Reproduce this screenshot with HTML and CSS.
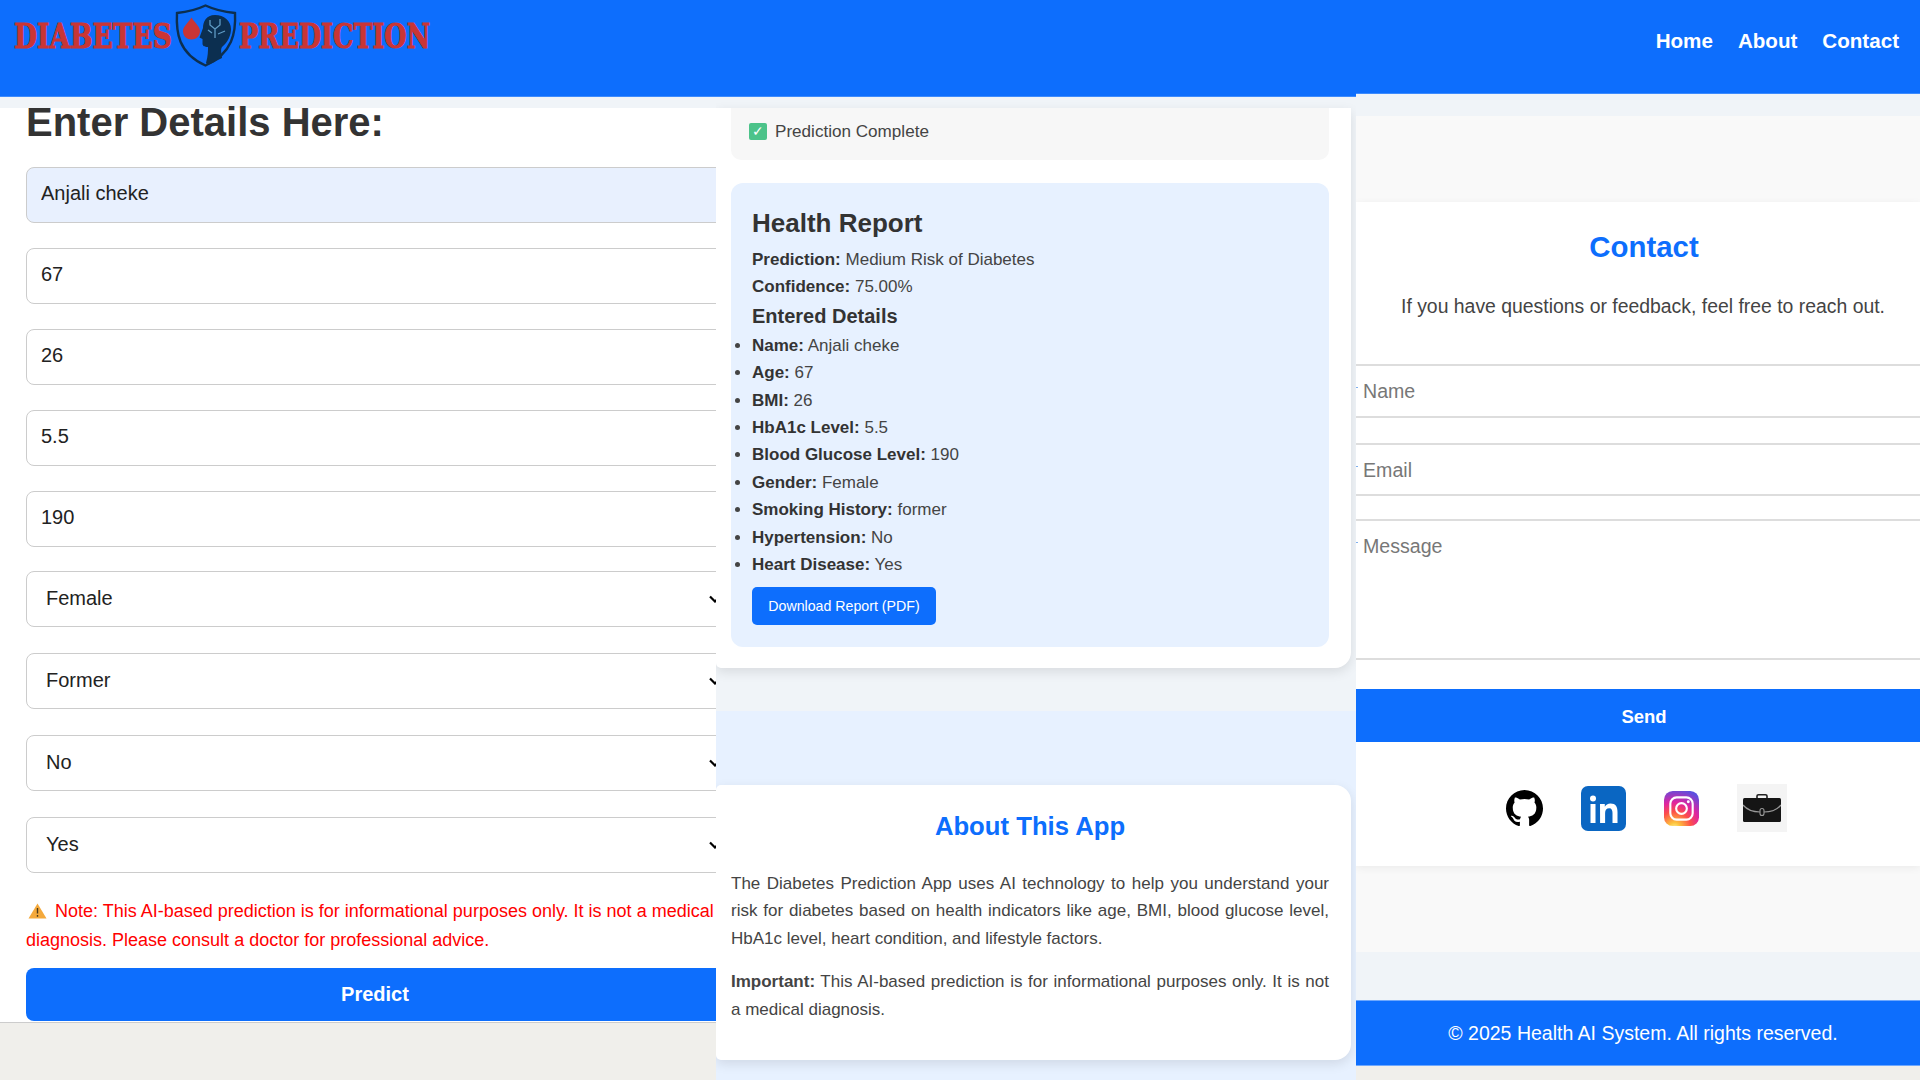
FILE: index.html
```html
<!DOCTYPE html>
<html lang="en">
<head>
    <meta charset="UTF-8">
    <meta name="viewport" content="width=device-width, initial-scale=1.0">
    <title>Diabetes Prediction</title>
    <link rel="stylesheet" href="styles.css">
</head>
<body>

<div class="collage">

    <!-- form -->
    <section class="panel panelForm">
        <header class="topBar">
            <svg class="logo" viewBox="0 0 540 70" width="540" height="70" aria-label="Diabetes Prediction">
                <text class="logoText" x="14" y="48" textLength="158" lengthAdjust="spacingAndGlyphs">DIABETES</text>
                <text class="logoText" x="239" y="48" textLength="191" lengthAdjust="spacingAndGlyphs">PREDICTION</text>
                <path d="M205.500 5.500C196 10 187 12 177 13C176 32 178 53 205.500 65.500C233 53 236 32 235 13C225 12 215 10 205.500 5.500Z" fill="none" stroke="#0c2f50" stroke-width="2.400"/>
                <path d="M191.500 17.500C187.500 23.500 183 27 183 31C183 36 187 39.500 191.500 39.500C196 39.500 200 36 200 31C200 27 195.500 23.500 191.500 17.500Z" fill="#c93535"/>
                <path d="M215 15C206 15 203 22 203 28L199.500 37.500L202.500 39L202.500 44C203 47 206 47 208 47C208 51 208 56 206 63L208 65L222 58C222 54 220 50 222 47C228 42 231 35 231 29C231 21 224 15 215 15Z" fill="#0c2f50"/>
                <path d="M215 38V29M215 29L210 25V20M215 29L220 25V19M218 34L225 31M212 33L208 30" fill="none" stroke="#5f9bc4" stroke-width="1.300"/>
            </svg>
        </header>
        <div class="gapStrip"></div>
        <div class="formBody">
            <h1>Enter Details Here:</h1>
            <input class="field fieldFilled" type="text" value="Anjali cheke">
            <input class="field" type="text" value="67">
            <input class="field" type="text" value="26">
            <input class="field" type="text" value="5.5">
            <input class="field" type="text" value="190">
            <select class="field pick pickFirst"><option>Female</option></select>
            <select class="field pick"><option>Former</option></select>
            <select class="field pick"><option>No</option></select>
            <select class="field pick"><option>Yes</option></select>
            <p class="note"><svg class="warnIcon" viewBox="0 0 19 16" width="19" height="16"><path d="M9.500 0.500L18.500 15.500H0.500Z" fill="#f4a93c"/><path d="M9.500 5V10.500M9.500 12V13.800" stroke="#4a3a1c" stroke-width="1.400"/></svg>Note: This AI-based prediction is for informational purposes only. It is not a medical diagnosis. Please consult a doctor for professional advice.</p>
            <button class="bigBtn predictBtn" type="button">Predict</button>
        </div>
        <div class="pageEnd"></div>
    </section>

    <!-- result + about -->
    <section class="panel panelResult">
        <div class="topBar"></div>
        <div class="gapStrip"></div>
        <div class="card resultCard">
            <div class="status"><span class="tick">✓</span> Prediction Complete</div>
            <div class="report">
                <h3>Health Report</h3>
                <p><strong>Prediction:</strong> Medium Risk of Diabetes</p>
                <p><strong>Confidence:</strong> 75.00%</p>
                <h4>Entered Details</h4>
                <ul>
                    <li><strong>Name:</strong> Anjali cheke</li>
                    <li><strong>Age:</strong> 67</li>
                    <li><strong>BMI:</strong> 26</li>
                    <li><strong>HbA1c Level:</strong> 5.5</li>
                    <li><strong>Blood Glucose Level:</strong> 190</li>
                    <li><strong>Gender:</strong> Female</li>
                    <li><strong>Smoking History:</strong> former</li>
                    <li><strong>Hypertension:</strong> No</li>
                    <li><strong>Heart Disease:</strong> Yes</li>
                </ul>
                <button class="pdfBtn" type="button">Download Report (PDF)</button>
            </div>
        </div>
        <div class="aboutBand">
            <div class="card aboutCard">
                <h2>About This App</h2>
                <p>The Diabetes Prediction App uses AI technology to help you understand your risk for diabetes based on health indicators like age, BMI, blood glucose level, HbA1c level, heart condition, and lifestyle factors.</p>
                <p><strong>Important:</strong> This AI-based prediction is for informational purposes only. It is not a medical diagnosis.</p>
            </div>
        </div>
    </section>

    <!-- contact -->
    <section class="panel panelContact">
        <header class="topBar contactBar">
            <nav class="nav">
                <a href="#">Home</a>
                <a href="#">About</a>
                <a href="#">Contact</a>
            </nav>
        </header>
        <div class="contactStrip"></div>
        <div class="softBand"></div>
        <div class="contactCard">
            <h2>Contact</h2>
            <p class="contactLead">If you have questions or feedback, feel free to reach out.</p>
            <div class="lineWrap"><input class="line lineName" type="text" placeholder="Name"></div>
            <div class="lineWrap"><input class="line lineMail" type="email" placeholder="Email"></div>
            <div class="lineWrap"><textarea class="line lineArea" placeholder="Message"></textarea></div>
            <button class="bigBtn sendBtn" type="button">Send</button>
            <div class="socials">
                <svg class="social" viewBox="0 0 16 16" width="37" height="37"><path fill="#000" d="M8 0C3.580 0 0 3.580 0 8c0 3.540 2.290 6.530 5.470 7.590.4.070.55-.17.55-.38 0-.19-.01-.82-.01-1.490-2.010.37-2.530-.49-2.690-.94-.09-.23-.48-.94-.82-1.130-.28-.15-.68-.52-.01-.53.630-.01 1.080.58 1.230.82.720 1.210 1.870.87 2.330.66.070-.52.280-.87.510-1.070-1.780-.2-3.640-.89-3.640-3.950 0-.87.310-1.590.820-2.150-.08-.2-.36-1.020.08-2.120 0 0 .67-.21 2.200.82.640-.18 1.320-.27 2-.27s1.360.09 2 .27c1.530-1.040 2.200-.82 2.200-.82.440 1.100.160 1.920.080 2.120.510.560.820 1.270.820 2.150 0 3.070-1.870 3.750-3.650 3.950.290.250.540.730.540 1.480 0 1.070-.010 1.930-.010 2.200 0 .210.150.460.550.380A8.010 8.010 0 0 0 16 8c0-4.420-3.580-8-8-8Z"/></svg>
                <svg class="social" viewBox="0 0 45 45" width="45" height="45"><rect width="45" height="45" rx="7" fill="#0a66c2"/><circle cx="12" cy="12.500" r="3" fill="#fff"/><path fill="#fff" d="M9.500 18h5v19h-5zM19 18h4.800v2.800c1-1.900 3-3.200 5.700-3.200 5.300 0 7 3.200 7 8.400V37h-5V27c0-2.700-.8-4.800-3.200-4.800-2.800 0-4.200 2-4.200 4.800v10h-5Z"/></svg>
                <svg class="social" viewBox="0 0 36 36" width="35" height="35">
                    <defs>
                        <radialGradient id="instaBg" cx=".3" cy="1.07" r="1.2">
                            <stop offset="0" stop-color="#fdf497"/>
                            <stop offset=".14" stop-color="#fdc23d"/>
                            <stop offset=".4" stop-color="#fd4f49"/>
                            <stop offset=".62" stop-color="#e0249f"/>
                            <stop offset=".95" stop-color="#5a4fe0"/>
                        </radialGradient>
                    </defs>
                    <rect width="36" height="36" rx="9" fill="url(#instaBg)"/>
                    <rect x="6.500" y="6.500" width="23" height="23" rx="6.500" fill="none" stroke="#fff" stroke-width="2.200"/>
                    <circle cx="18" cy="18" r="5.500" fill="none" stroke="#fff" stroke-width="2.200"/>
                    <circle cx="25" cy="11" r="1.500" fill="#fff"/>
                </svg>
                <span class="caseTile">
                    <svg viewBox="0 0 38 28" width="38" height="28">
                        <path d="M14 4V2C14 1 14.800 .8 15.500 .8H22.500C23.200 .8 24 1 24 2V4" fill="none" stroke="#222" stroke-width="1.600"/>
                        <rect y="4" width="38" height="24" rx="1.500" fill="#151515"/>
                        <path d="M0 11C5 17 11 18 17 18M21 18C27 18 33 17 38 11" fill="none" stroke="#999" stroke-width="1.200"/>
                        <rect x="17" y="14.500" width="4" height="7" rx="2" fill="#151515" stroke="#999" stroke-width="1.100"/>
                    </svg>
                </span>
            </div>
        </div>
        <div class="softBand softBandLow"></div>
        <div class="contactStrip contactStripLow"></div>
        <footer class="footer">© 2025 Health AI System. All rights reserved.</footer>
        <div class="pageEnd"></div>
    </section>

</div>

</body>
</html>
```

FILE: styles.css
```css
* {
    box-sizing: border-box;
}
html, body {
    margin: 0;
    height: 100%;
}
body {
    font-family: "Liberation Sans", Arial, sans-serif;
    background-color: #f0efeb;
    overflow: hidden;
}
.collage {
    display: grid;
    grid-template-columns: 716px 640px 564px;
    height: 1080px;
}
.panel {
    display: flex;
    flex-direction: column;
    height: 1080px;
    overflow: hidden;
}

/* top bars */
.topBar {
    flex: none;
    height: 97px;
    background-color: #0d6efd;
    border-bottom: 1px solid #3d8bfd;
}
.logo {
    display: block;
}
.logoText {
    font-family: "DejaVu Serif", serif;
    font-weight: 700;
    font-size: 34px;
    fill: #c93535;
    stroke: #c93535;
    stroke-width: 1.2px;
}
.gapStrip {
    flex: none;
    height: 11px;
    background-color: #f0f4f8;
}
.contactBar {
    display: flex;
    justify-content: flex-end;
    height: 94px;
}
.nav {
    display: flex;
    gap: 25px;
    padding: 29px 21px 0 0;
}
.nav a {
    color: white;
    font-size: 20.6px;
    font-weight: 700;
    text-decoration: none;
}

/* form column */
.panelForm {
    background-color: #fff;
}
.formBody {
    flex: none;
    height: 914px;
    width: 760px;
    padding: 0 26px;
    background-color: #fff;
}
.formBody h1 {
    margin: 0 0 25px;
    height: 34px;
    font-size: 40px;
    line-height: 28px;
    color: #333;
}
.field {
    display: block;
    width: 708px;
    height: 56px;
    margin-bottom: 25px;
    padding: 0 14px 3px;
    font-family: inherit;
    font-size: 20px;
    color: #222;
    background-color: #fff;
    border: 1px solid #ccc;
    border-radius: 8px;
}
.fieldFilled {
    background-color: #e8f0fe;
}
.pick {
    margin-bottom: 26px;
    padding: 0 19px 2px;
    appearance: none;
    background-image: url("data:image/svg+xml,%3Csvg xmlns='http://www.w3.org/2000/svg' viewBox='0 0 12 8'%3E%3Cpath d='M1 1.500L6 6.500L11 1.500' fill='none' stroke='%23000' stroke-width='2.200'/%3E%3C/svg%3E");
    background-repeat: no-repeat;
    background-size: 12px 8px;
    background-position: 682px 50%;
}
.pickFirst {
    margin-top: -1px;
}
.note {
    margin: -2px 0 0;
    width: 690px;
    font-size: 18px;
    line-height: 28.6px;
    color: red;
}
.warnIcon {
    margin: 0 8px 0 2px;
    vertical-align: -2px;
}
.bigBtn {
    display: block;
    font-family: inherit;
    font-size: 20px;
    font-weight: 700;
    color: white;
    background-color: #0d6efd;
    border: 0;
}
.predictBtn {
    width: 698px;
    height: 53px;
    margin-top: 14px;
    border-radius: 8px;
}
.pageEnd {
    flex: 1;
    background-color: #f0efeb;
    border-top: 1px solid #ccc;
}
.panelContact .pageEnd {
    border-top: 0;
}

/* middle column */
.panelResult {
    background-color: #f0f4f8;
}
.card {
    background-color: white;
    box-shadow: 0 4px 12px rgba(0, 0, 0, 0.1);
}
.resultCard {
    flex: none;
    width: 635px;
    height: 560px;
    padding: 0 22px 0 15px;
    border-radius: 0 0 16px 5px;
}
.status {
    display: flex;
    align-items: center;
    gap: 8px;
    height: 52px;
    padding: 0 0 5px 18px;
    font-size: 17.1px;
    color: #444;
    background-color: #f7f7f7;
    border-radius: 0 0 10px 10px;
}
.tick {
    width: 18px;
    height: 17px;
    font-size: 14px;
    line-height: 17px;
    text-align: center;
    color: white;
    background-color: #4cc38a;
    border-radius: 2px;
}
.report {
    height: 464px;
    margin-top: 23px;
    padding: 24px 21px;
    color: #444;
    background-color: #e7f1ff;
    border-radius: 12px;
}
.report h3 {
    margin: 0 0 7px;
    font-size: 26px;
    line-height: 32px;
    color: #333;
}
.report p {
    margin: 0;
    font-size: 17px;
    line-height: 27.4px;
}
.report strong {
    color: #333;
}
.report h4 {
    margin: 0;
    font-size: 20px;
    line-height: 31px;
    color: #333;
}
.report ul {
    margin: 0;
    padding: 0;
    font-size: 17px;
    line-height: 27.4px;
}
.pdfBtn {
    display: block;
    width: 184px;
    height: 38px;
    margin-top: 9px;
    padding: 0;
    font-family: inherit;
    font-size: 14.2px;
    color: white;
    background-color: #0d6efd;
    border: 0;
    border-radius: 5px;
}
.aboutBand {
    flex: 1;
    margin-top: 43px;
    padding-top: 74px;
    background-color: #e7f1ff;
}
.aboutCard {
    width: 635px;
    height: 275px;
    padding: 25px 22px 0 15px;
    border-radius: 5px 16px 16px 5px;
}
.aboutCard h2 {
    margin: 0 0 28px;
    font-size: 25.7px;
    line-height: 32px;
    text-align: center;
    color: #0d6efd;
}
.aboutCard p {
    margin: 0 0 16px;
    font-size: 17px;
    line-height: 27.4px;
    text-align: justify;
    color: #444;
}

/* contact column */
.contactStrip {
    flex: none;
    height: 22px;
    background-color: #f0f4f8;
}
.softBand {
    flex: none;
    height: 86px;
    background-color: #f9f9f9;
}
.contactCard {
    position: relative;
    z-index: 1;
    flex: none;
    height: 664px;
    padding-top: 27px;
    background-color: white;
    box-shadow: 0 2px 8px rgba(0, 0, 0, 0.06);
}
.contactCard h2 {
    margin: 0 0 27px;
    padding-left: 12px;
    font-size: 29.4px;
    line-height: 36px;
    text-align: center;
    color: #0d6efd;
}
.contactLead {
    margin: 0 0 44px;
    padding-left: 10px;
    font-size: 19.4px;
    line-height: 28px;
    text-align: center;
    color: #444;
}
.lineWrap {
    position: relative;
}
/* tiny blue nick left of each field */
.lineWrap::before {
    content: "";
    position: absolute;
    left: 0;
    top: 23px;
    width: 2px;
    height: 1px;
    background-color: #7fb0ee;
}
.line {
    display: block;
    width: 600px;
    margin-bottom: 25px;
    padding: 14px 7px;
    font-family: inherit;
    font-size: 19.6px;
    border: 0;
    border-top: 2px solid #ddd;
    border-bottom: 2px solid #ddd;
    background-color: white;
    resize: none;
}
.line::placeholder {
    color: #777;
}
.lineName {
    height: 54px;
}
.lineMail {
    height: 53px;
    margin-bottom: 23px;
    padding: 15px 7px 13px;
}
.lineArea {
    height: 141px;
    margin-bottom: 29px;
}
.sendBtn {
    width: 100%;
    height: 53px;
    padding: 2px 0 0 12px;
    font-size: 18.5px;
}
.socials {
    display: flex;
    align-items: center;
    justify-content: center;
    gap: 38px;
    padding: 42px 0 0 17px;
}
.caseTile {
    display: flex;
    align-items: center;
    justify-content: center;
    width: 50px;
    height: 48px;
    background-color: #f4f4f4;
}
.softBandLow {
    height: 86px;
}
.contactStripLow {
    height: 48px;
}
.footer {
    flex: none;
    height: 66px;
    padding-left: 10px;
    line-height: 64px;
    text-align: center;
    font-size: 19.5px;
    color: white;
    background-color: #0d6efd;
    border-top: 1px solid #6ea8fe;
    border-bottom: 1px solid #6ea8fe;
}
```
